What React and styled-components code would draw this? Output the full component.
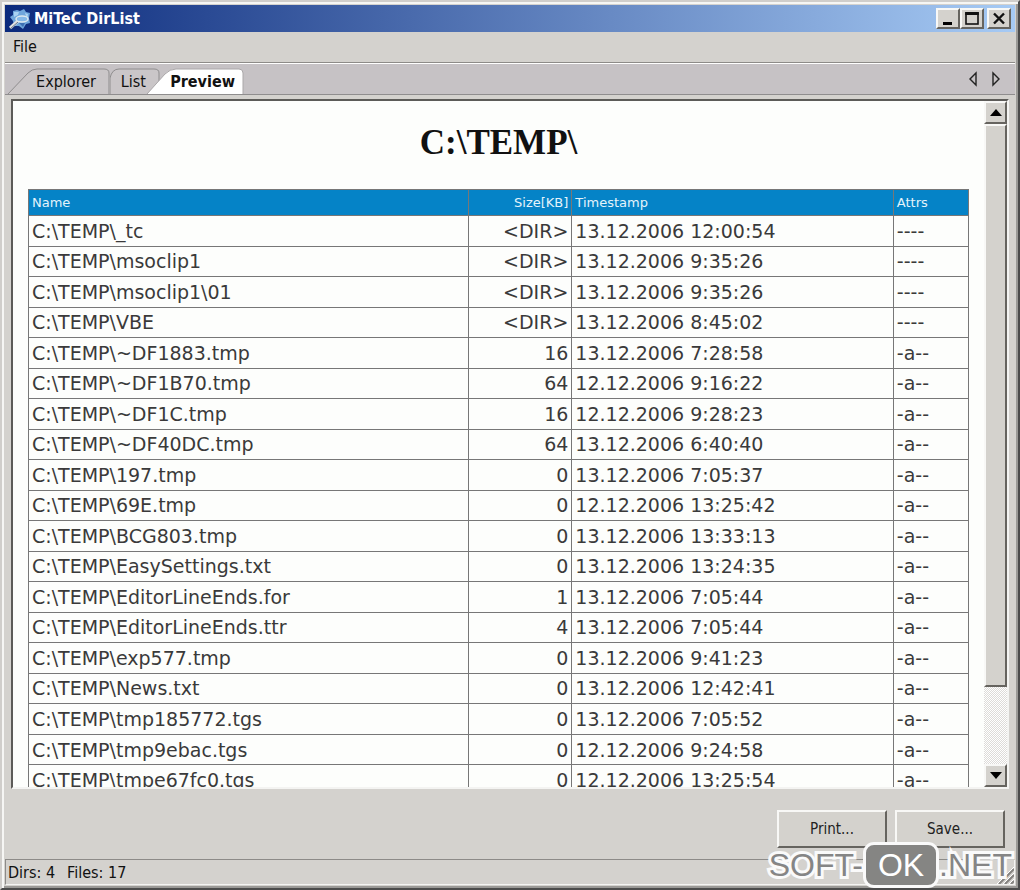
import React, { useState } from 'react';
import styled, { createGlobalStyle, css } from 'styled-components';

const GlobalStyle = createGlobalStyle`
  * {
    box-sizing: border-box;
  }
  body {
    margin: 0;
    background: #d4d2ce;
    font-family: 'DejaVu Sans Condensed', 'DejaVu Sans', sans-serif;
    font-size: 16px;
    color: #111;
  }
`;

const raised = css`
  background: #d4d2cd;
  border: 2px solid;
  border-color: #f8f8f6 #66645f #66645f #f8f8f6;
  border-radius: 0;
`;

const Window = styled.div`
  position: relative;
  display: flex;
  flex-direction: column;
  height: 100vh;
  min-height: 400px;
  padding: 3px;
  background: #d4d2ce;
  border: 2px solid;
  border-color: #d0cecb #4b4b4b #4b4b4b #d0cecb;
  box-shadow: inset 2px 2px 0 #f6f6f4, inset -2px -2px 0 #9a9996;
`;

const TitleBar = styled.header`
  display: flex;
  align-items: center;
  flex: none;
  height: 27px;
  padding: 0 4px;
  background: linear-gradient(to right, #0b2a7c, #a6caf4);
`;

const AppIcon = styled.svg`
  flex: none;
  width: 22px;
  height: 22px;
`;

const Title = styled.h1`
  flex: 1;
  margin: 0 0 0 3px;
  color: #fff;
  font-size: 16px;
  font-weight: bold;
  line-height: 20px;
`;

const WindowButtons = styled.div`
  display: flex;
`;

const WindowButton = styled.button`
  ${raised}
  display: flex;
  align-items: center;
  justify-content: center;
  width: 24px;
  height: 21px;
  padding: 0;
  margin-left: ${(p) => (p.$gap ? '3px' : '0')};
`;

const MenuBar = styled.nav`
  flex: none;
  height: 31px;
  padding: 4px 4px;
  border-bottom: 1px solid #8d8b88;
`;

const MenuItem = styled.button`
  padding: 0 4px;
  border: none;
  background: none;
  color: inherit;
  font: inherit;
  line-height: 22px;
`;

const TabBar = styled.div`
  display: flex;
  align-items: flex-end;
  flex: none;
  height: 32px;
  padding-left: 2px;
  background: #c6c2c5;
  border-top: 1px solid #fff;
  border-bottom: 1px solid #8f8d8e;
`;

const Tab = styled.button`
  position: relative;
  display: flex;
  align-items: center;
  justify-content: flex-end;
  width: ${(p) => p.$width}px;
  height: 26px;
  margin-left: ${(p) => (p.$overlap ? '-14px' : '0')};
  padding: 0 ${(p) => (p.$active ? 9 : 14)}px 0 0;
  border: none;
  background: none;
  color: #111;
  font: inherit;
  font-weight: ${(p) => (p.$active ? 'bold' : 'normal')};
  z-index: ${(p) => (p.$active ? 1 : 0)};
`;

const TabShape = styled.svg`
  position: absolute;
  inset: 0;
  z-index: -1;
  width: 100%;
  height: 100%;
`;

const TabArrows = styled.div`
  display: flex;
  align-self: center;
  margin-left: auto;
  margin-right: 11px;
  gap: 7px;
`;

const ArrowButton = styled.button`
  width: 16px;
  height: 20px;
  padding: 0;
  border: none;
  background: none;
`;

const Viewer = styled.main`
  display: flex;
  flex: 1;
  min-height: 0;
  margin: 4px 6px 0 6px;
  background: #fdfefc;
  border: 2px solid;
  border-color: #5c5b58 #f4f4f2 #f4f4f2 #5c5b58;
`;

const Page = styled.div`
  flex: 1;
  min-width: 0;
  overflow: hidden;
  padding: 0 15px;
`;

const PageTitle = styled.h2`
  margin: 23px 0 27px;
  font-family: 'Liberation Serif', serif;
  font-size: 35px;
  font-weight: bold;
  line-height: 38px;
  text-align: center;
`;

const FileTable = styled.table`
  width: 100%;
  height: 607px;
  border-collapse: collapse;
  table-layout: fixed;
  color: #3a3a3a;
  font-family: 'DejaVu Sans', sans-serif;
  font-size: 19px;
  line-height: 22px;
`;

const HeadCell = styled.th`
  width: ${(p) => p.$width || 'auto'};
  height: 26px;
  padding: 0 3px;
  background: #0583c7;
  border: 1px solid #777;
  color: #e4f3fb;
  font-size: 13px;
  font-weight: normal;
  line-height: 20px;
  text-align: ${(p) => (p.$right ? 'right' : 'left')};
`;

const Cell = styled.td`
  padding: 0 3px;
  border: 1px solid #777;
  text-align: ${(p) => (p.$right ? 'right' : 'left')};
  white-space: nowrap;
`;

const ScrollBar = styled.div`
  display: flex;
  flex-direction: column;
  flex: none;
  width: 23px;
  background: repeating-conic-gradient(#fff 0 25%, #dddbd8 0 50%) 0 0 / 2px 2px;
`;

const ScrollButton = styled.button`
  ${raised}
  display: flex;
  align-items: center;
  justify-content: center;
  flex: none;
  height: 23px;
  padding: 0;
`;

const ScrollTrack = styled.div`
  flex: 1;
`;

const ScrollThumb = styled.div`
  ${raised}
  height: 88%;
`;

const Actions = styled.div`
  display: flex;
  justify-content: flex-end;
  flex: none;
  gap: 8px;
  padding: 21px 10px 11px;
`;

const ActionButton = styled.button`
  ${raised}
  width: 110px;
  height: 38px;
  padding: 0;
  color: #222;
  font: inherit;
  font-size: 15px;
`;

const StatusBar = styled.footer`
  display: flex;
  align-items: center;
  justify-content: space-between;
  flex: none;
  height: 26px;
  gap: 12px;
  padding-left: 2px;
  border: 1px solid;
  border-color: #8d8b88 #f4f4f2 #f4f4f2 #8d8b88;
`;

const StatusText = styled.span`
  margin-right: 12px;
`;

const Grip = styled.svg`
  align-self: flex-end;
  width: 17px;
  height: 17px;
`;

const Watermark = styled.div`
  position: absolute;
  right: 6px;
  bottom: 0;
  display: flex;
  align-items: center;
  color: #858585;
  font-family: 'Liberation Sans', sans-serif;
  font-size: 32px;
  line-height: 40px;
  pointer-events: none;
`;

const Outlined = styled.span`
  -webkit-text-stroke: 6px #fafafa;
  paint-order: stroke fill;
`;

const Badge = styled.span`
  padding: 0 12px;
  background: #858583;
  border: 3px solid #fafafa;
  border-radius: 11px;
  color: #fff;
`;

const files = [
  ['_tc', '<DIR>', '13.12.2006 12:00:54', '----'],
  ['msoclip1', '<DIR>', '13.12.2006 9:35:26', '----'],
  ['msoclip1\\01', '<DIR>', '13.12.2006 9:35:26', '----'],
  ['VBE', '<DIR>', '13.12.2006 8:45:02', '----'],
  ['~DF1883.tmp', '16', '13.12.2006 7:28:58', '-a--'],
  ['~DF1B70.tmp', '64', '12.12.2006 9:16:22', '-a--'],
  ['~DF1C.tmp', '16', '12.12.2006 9:28:23', '-a--'],
  ['~DF40DC.tmp', '64', '13.12.2006 6:40:40', '-a--'],
  ['197.tmp', '0', '13.12.2006 7:05:37', '-a--'],
  ['69E.tmp', '0', '12.12.2006 13:25:42', '-a--'],
  ['BCG803.tmp', '0', '13.12.2006 13:33:13', '-a--'],
  ['EasySettings.txt', '0', '13.12.2006 13:24:35', '-a--'],
  ['EditorLineEnds.for', '1', '13.12.2006 7:05:44', '-a--'],
  ['EditorLineEnds.ttr', '4', '13.12.2006 7:05:44', '-a--'],
  ['exp577.tmp', '0', '13.12.2006 9:41:23', '-a--'],
  ['News.txt', '0', '13.12.2006 12:42:41', '-a--'],
  ['tmp185772.tgs', '0', '13.12.2006 7:05:52', '-a--'],
  ['tmp9ebac.tgs', '0', '12.12.2006 9:24:58', '-a--'],
  ['tmpe67fc0.tgs', '0', '12.12.2006 13:25:54', '-a--'],
];

const tabs = [
  { name: 'Explorer', width: 103, shape: 'M1 26 L21 5 Q25 1 30 1 H97 Q102 1 102 5 V26' },
  { name: 'List', width: 50, shape: 'M0 26 V10 Q2 1 9 1 H44 Q49 1 49 5 V26' },
  { name: 'Preview', width: 98, overlap: true, shape: 'M1 26 L19 6 Q24 1 30 1 H93 Q97 1 97 5 V26' },
];

function App() {
  const [activeTab, setActiveTab] = useState('Preview');

  return (
    <>
      <GlobalStyle />
      <Window>
        <TitleBar>
          <AppIcon viewBox="0 0 22 22">
            <path d="M4 3 L8 2 L11 3 L15 1 L17 4 L21 5 L20 10 L21 15 L17 16 L14 21 L10 18 L5 18 L4 13 L1 9 L4 7 Z" fill="#6fa6dc" />
            <path d="M5 4 L10 4 L9 7 L5 9 Z M16 5 L19 6 L18 12 Z" fill="#a9d2f2" />
            <path d="M10 15 L16 15 L14 19 Z" fill="#3d70b4" />
            <path d="M1 20 L9 13" stroke="#e3e3e0" strokeWidth="3" />
            <path d="M1 21 L9 14" stroke="#65758c" strokeWidth="1" />
            <ellipse cx="13" cy="11" rx="6" ry="3" fill="#86b9e8" stroke="#dce8ee" strokeWidth="1.5" />
          </AppIcon>
          <Title>MiTeC DirList</Title>
          <WindowButtons>
            <WindowButton aria-label="Minimize">
              <svg width="16" height="15"><path d="M3 12.5 H12" stroke="#000" strokeWidth="3" /></svg>
            </WindowButton>
            <WindowButton aria-label="Maximize">
              <svg width="16" height="15" fill="none" stroke="#111">
                <rect x="2" y="2" width="12" height="11" strokeWidth="1.6" />
                <path d="M1.2 2.5 H14.8" strokeWidth="3" />
              </svg>
            </WindowButton>
            <WindowButton $gap aria-label="Close">
              <svg width="16" height="15"><path d="M3 2.5 L13 12.5 M13 2.5 L3 12.5" stroke="#111" strokeWidth="2.4" /></svg>
            </WindowButton>
          </WindowButtons>
        </TitleBar>

        <MenuBar>
          <MenuItem>File</MenuItem>
        </MenuBar>

        <TabBar role="tablist">
          {tabs.map((tab) => {
            const active = tab.name === activeTab;
            return (
              <Tab
                key={tab.name}
                role="tab"
                aria-selected={active}
                $width={tab.width}
                $overlap={tab.overlap}
                $active={active}
                onClick={() => setActiveTab(tab.name)}
              >
                <TabShape>
                  <path d={tab.shape} fill={active ? '#fff' : '#cac6c8'} stroke={active ? '#aaa7a9' : '#8f8d8e'} />
                </TabShape>
                {tab.name}
              </Tab>
            );
          })}
          <TabArrows>
            <ArrowButton aria-label="Previous tab">
              <svg width="16" height="20"><path d="M11 4 V16 L5 10 Z" fill="none" stroke="#222" strokeWidth="1.4" /></svg>
            </ArrowButton>
            <ArrowButton aria-label="Next tab">
              <svg width="16" height="20"><path d="M5 4 V16 L11 10 Z" fill="none" stroke="#222" strokeWidth="1.4" /></svg>
            </ArrowButton>
          </TabArrows>
        </TabBar>

        <Viewer>
          <Page>
            <PageTitle>C:\TEMP\</PageTitle>
            <FileTable>
              <thead>
                <tr>
                  <HeadCell>Name</HeadCell>
                  <HeadCell $width="11%" $right>Size[KB]</HeadCell>
                  <HeadCell $width="34.2%">Timestamp</HeadCell>
                  <HeadCell $width="8%">Attrs</HeadCell>
                </tr>
              </thead>
              <tbody>
                {files.map(([name, size, timestamp, attrs]) => (
                  <tr key={name}>
                    <Cell>C:\TEMP\{name}</Cell>
                    <Cell $right>{size}</Cell>
                    <Cell>{timestamp}</Cell>
                    <Cell>{attrs}</Cell>
                  </tr>
                ))}
              </tbody>
            </FileTable>
          </Page>
          <ScrollBar>
            <ScrollButton aria-label="Scroll up">
              <svg width="12" height="7"><path d="M6 0 L12 7 H0 Z" /></svg>
            </ScrollButton>
            <ScrollTrack>
              <ScrollThumb />
            </ScrollTrack>
            <ScrollButton aria-label="Scroll down">
              <svg width="12" height="7"><path d="M0 0 H12 L6 7 Z" /></svg>
            </ScrollButton>
          </ScrollBar>
        </Viewer>

        <Actions>
          <ActionButton>Print...</ActionButton>
          <ActionButton>Save...</ActionButton>
        </Actions>

        <StatusBar>
          <div>
            <StatusText>Dirs: 4</StatusText>
            <StatusText>Files: 17</StatusText>
          </div>
          <Grip viewBox="0 0 17 17">
            <path d="M2 17 L17 2 M8 17 L17 8 M14 17 L17 14" stroke="#858380" strokeWidth="2" />
            <path d="M0 17 L17 0 M6 17 L17 6 M12 17 L17 12" stroke="#fff" />
          </Grip>
        </StatusBar>

        <Watermark>
          <Outlined>SOFT-</Outlined>
          <Badge>OK</Badge>
          <Outlined>.NET</Outlined>
        </Watermark>
      </Window>
    </>
  );
}

export default App;
